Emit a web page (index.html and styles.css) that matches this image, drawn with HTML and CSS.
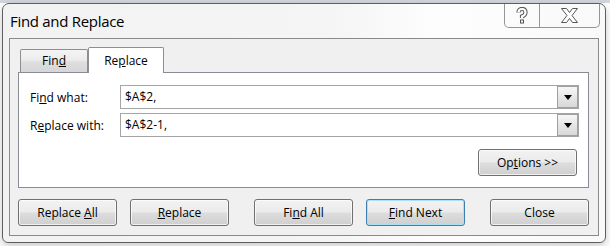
FILE: index.html
```html
<!DOCTYPE html>
<html lang="en">
<head>
  <meta charset="UTF-8" />
  <title>Find and Replace</title>
  <link rel="stylesheet" href="styles.css">
</head>
<body>
  <div class="window">
    <div class="titlebar">
      <span class="title">Find and Replace</span>
      <div class="caption">
        <span class="cap cap-help">
          <svg width="12" height="17" viewBox="0 0 12 17">
            <path d="M2.5 5.5 Q2.5 2 6 2 Q9.5 2 9.5 5.5 Q9.5 8 6 9.5 L6 11" fill="none" stroke="#555" stroke-width="4.2" />
            <path d="M2.5 5.5 Q2.5 2 6 2 Q9.5 2 9.5 5.5 Q9.5 8 6 9.5 L6 11" fill="none" stroke="#fff" stroke-width="2.2" />
            <rect x="4.5" y="13" width="3" height="3" fill="#fff" stroke="#555" />
          </svg>
        </span>
        <span class="cap cap-close">
          <svg width="17" height="15" viewBox="0 0 17 15">
            <polygon points="0.5,0.5 5.5,0.5 8.5,4.5 11.5,0.5 16.5,0.5 11,7.5 16.5,14.5 11.5,14.5 8.5,10.5 5.5,14.5 0.5,14.5 6,7.5" fill="#fff" stroke="#555" />
          </svg>
        </span>
      </div>
    </div>

    <div class="client">
      <div class="tabs">
        <div class="tab">Fin<u>d</u></div>
        <div class="tab active">Re<u>p</u>lace</div>
      </div>

      <div class="tab-panel">
        <div class="field">
          <label>Fi<u>n</u>d what:</label>
          <div class="combo"><span class="value">$A$2,</span><span class="drop"><i></i></span></div>
        </div>
        <div class="field">
          <label>R<u>e</u>place with:</label>
          <div class="combo"><span class="value">$A$2-1,</span><span class="drop"><i></i></span></div>
        </div>
        <div class="options-row">
          <button class="btn">Op<u>t</u>ions &gt;&gt;</button>
        </div>
      </div>

      <div class="actions">
        <div class="group">
          <button class="btn">Replace <u>A</u>ll</button>
          <button class="btn"><u>R</u>eplace</button>
        </div>
        <div class="group">
          <button class="btn">Fi<u>n</u>d All</button>
          <button class="btn default"><u>F</u>ind Next</button>
        </div>
        <div class="group">
          <button class="btn">Close</button>
        </div>
      </div>
    </div>
  </div>
</body>
</html>
```

FILE: styles.css
```css
body {
  margin: 0;
  width: 610px;
  height: 246px;
  overflow: hidden;
  font-family: "Segoe UI", "Open Sans", sans-serif;
  font-size: 12px;
  color: #000;
  background:
    linear-gradient(#d3d7dc, #d3d7dc) no-repeat top / 100% 3px,
    #fff;
}

u {
  text-underline-offset: 1px;
}

/* Window frame */
.window {
  box-sizing: border-box;
  width: 604px;
  height: 240px;
  margin: 3px 0 0 2px;
  border: 1px solid #5e5e5e;
  border-radius: 7px 7px 6px 6px;
  background: linear-gradient(to right, #f2f2f2 0%, #f5f5f5 55%, #fdfdfd 72%, #f9f9f9 100%);
  box-shadow: 0 3px 8px rgba(0, 0, 0, 0.22);
  display: flex;
  flex-direction: column;
}

.titlebar {
  height: 34px;
  flex: none;
  display: flex;
  justify-content: space-between;
  align-items: flex-start;
  padding-left: 7px;
}

.title {
  font-size: 15px;
  line-height: 20px;
  margin-top: 7px;
  letter-spacing: -0.3px;
}

.caption {
  display: flex;
  box-sizing: border-box;
  height: 24px;
  margin-right: 5px;
  border: 1px solid #959595;
  border-top: none;
  border-radius: 0 0 5px 5px;
}

.cap {
  display: flex;
  align-items: center;
  justify-content: center;
}

.cap-help {
  width: 34px;
  border-right: 1px solid #959595;
}

.cap-close {
  width: 59px;
}

/* Client area */
.client {
  flex: 1;
  margin: 0 6px 6px;
  border: 1px solid #8a8a8a;
  background: #f0f0f0;
  padding: 8px 9px 9px 8px;
}

.tabs {
  display: flex;
  align-items: flex-end;
  height: 25px;
  padding-left: 2px;
}

.tab {
  box-sizing: border-box;
  width: 68px;
  height: 23px;
  border: 1px solid #8c8e94;
  border-bottom: none;
  border-radius: 2px 2px 0 0;
  background: linear-gradient(#f4f4f4, #ececec 45%, #dedede 55%, #d6d6d6);
  text-align: center;
  line-height: 22px;
}

.tab.active {
  width: 76px;
  height: 26px;
  padding-top: 2px;
  margin-bottom: -1px;
  background: #fff;
  position: relative;
}

.tab-panel {
  box-sizing: border-box;
  height: 116px;
  border: 1px solid #898c95;
  background: #fff;
  padding: 12px 9px 11px 11px;
}

.field {
  display: flex;
  align-items: center;
  height: 24px;
}

.field + .field {
  margin-top: 4px;
}

.field label {
  width: 90px;
  flex: none;
}

.combo {
  flex: 1;
  box-sizing: border-box;
  height: 24px;
  border: 1px solid #a5a5a5;
  display: flex;
}

.combo .value {
  flex: 1;
  padding-left: 4px;
  line-height: 22px;
}

.combo .drop {
  box-sizing: border-box;
  width: 21px;
  height: 22px;
  border: 1px solid #a0a0a0;
  background: linear-gradient(#f7f7f7, #e6e6e6 50%, #d8d8d8);
  display: flex;
  align-items: center;
  justify-content: center;
}

.combo .drop i {
  width: 0;
  height: 0;
  border-left: 4px solid transparent;
  border-right: 4px solid transparent;
  border-top: 5px solid #000;
  margin-top: 1px;
}

.options-row {
  display: flex;
  justify-content: flex-end;
  margin-top: 12px;
  padding-right: 2px;
}

/* Buttons */
.btn {
  box-sizing: border-box;
  width: 99px;
  height: 27px;
  padding: 0;
  font: inherit;
  color: #000;
  border: 1px solid #707070;
  border-radius: 3px;
  background: linear-gradient(#f2f2f2 0%, #ebebeb 48%, #dddddd 52%, #cfcfcf 100%);
  box-shadow: inset 0 0 0 1px rgba(255, 255, 255, 0.7);
}

.btn.default {
  border-color: #3c7fb1;
  box-shadow: inset 0 0 0 1px #a9e2f8;
}

.actions {
  display: flex;
  gap: 25px;
  margin-top: 11px;
}

.group {
  display: flex;
  gap: 13px;
}
```
